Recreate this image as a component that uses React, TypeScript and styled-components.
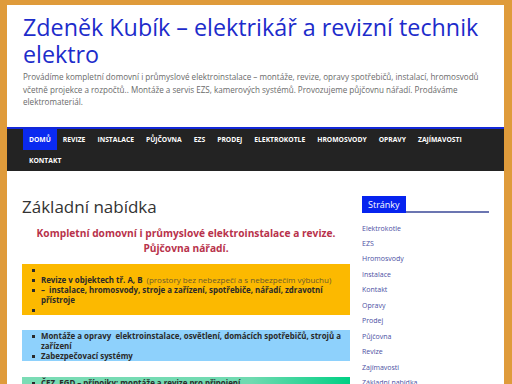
import React from "react";
import styled, { createGlobalStyle } from "styled-components";

const Global = createGlobalStyle`
  html, body { margin: 0; padding: 0; }
  body {
    background: #df9b3b;
    font-family: "Open Sans", "DejaVu Sans", sans-serif;
    overflow: hidden;
  }
`;

const Page = styled.div`
  padding: 5px 8px 0 7px;
`;

const Container = styled.div`
  background: #fff;
  width: 497px;
  min-height: 400px;
`;

const Header = styled.header`
  padding: 9px 16px 18px 16px;
`;

const SiteTitle = styled.h1`
  margin: 0;
  font-size: 23.3px;
  line-height: 27px;
  font-weight: 400;
  color: #1d2ccb;
`;

const Tagline = styled.p`
  margin: 3px 0 0;
  font-size: 8.1px;
  line-height: 12.5px;
  color: #6a6a6a;
`;

const Nav = styled.nav`
  background: #232323;
  border-top: 2px solid #1328d8;
  padding: 0 16px;
  display: flex;
  flex-wrap: wrap;
`;

const NavItem = styled.a<{ $active?: boolean }>`
  display: block;
  height: 21px;
  line-height: 21px;
  padding: 0 6px;
  font-size: 6.75px;
  font-weight: 700;
  color: #fff;
  text-transform: uppercase;
  text-decoration: none;
  background: ${(p) => (p.$active ? "#0a2af0" : "transparent")};
`;

const Body = styled.div`
  display: flex;
  gap: 12px;
  padding: 25px 15px 0 15px;
`;

const Main = styled.main`
  width: 328px;
`;

const PageTitle = styled.h2`
  margin: 0;
  font-size: 17px;
  line-height: 22px;
  font-weight: 400;
  color: #333;
`;

const Lead = styled.p`
  margin: 8px 0 0;
  text-align: center;
  font-size: 10.2px;
  line-height: 15px;
  font-weight: 700;
  color: #b8324b;
`;

const Box = styled.div<{ $bg: string; $mt: number }>`
  margin-top: ${(p) => p.$mt}px;
  background: ${(p) => p.$bg};
  padding: 1px 4px 0 10px;
`;

const List = styled.ul`
  margin: 0;
  padding: 0;
  list-style: none;
`;

const Item = styled.li`
  position: relative;
  padding-left: 9px;
  font-size: 7.9px;
  line-height: 10px;
  font-weight: 700;
  color: #2a2a2a;
  min-height: 10px;
  &::before {
    content: "";
    position: absolute;
    left: 0;
    top: 4px;
    width: 3px;
    height: 3px;
    background: #2a2a2a;
  }
`;

const Light = styled.span`
  font-weight: 400;
  font-size: 8px;
  color: #6b5a2e;
`;

const Sidebar = styled.aside`
  width: 127px;
`;

const WidgetHead = styled.div`
  display: flex;
  align-items: flex-end;
  border-bottom: 2px solid #6b75b1;
`;

const WidgetTitle = styled.h3`
  margin: 0 0 -2px;
  background: #0623ef;
  color: #fff;
  font-size: 9px;
  font-weight: 400;
  line-height: 17px;
  padding: 0 6px;
`;

const Links = styled.ul`
  margin: 8px 0 0;
  padding: 0;
  list-style: none;
`;

const LinkItem = styled.li`
  font-size: 7px;
  line-height: 15.45px;
  color: #4b4fa3;
`;

const navItems = [
  "Domů",
  "Revize",
  "Instalace",
  "Půjčovna",
  "EZS",
  "Prodej",
  "Elektrokotle",
  "Hromosvody",
  "Opravy",
  "Zajímavosti",
  "Kontakt",
];

const pages = [
  "Elektrokotle",
  "EZS",
  "Hromosvody",
  "Instalace",
  "Kontakt",
  "Opravy",
  "Prodej",
  "Půjčovna",
  "Revize",
  "Zajímavosti",
  "Základní nabídka",
];

export default function App() {
  return (
    <>
      <Global />
      <Page>
        <Container>
          <Header>
            <SiteTitle>Zdeněk Kubík – elektrikář a revizní technik elektro</SiteTitle>
            <Tagline>
              Provádíme kompletní domovní i průmyslové elektroinstalace – montáže, revize, opravy
              spotřebičů, instalací, hromosvodů včetně projekce a rozpočtů.. Montáže a servis EZS,
              kamerových systémů. Provozujeme půjčovnu nářadí. Prodáváme elektromateriál.
            </Tagline>
          </Header>
          <Nav>
            {navItems.map((n, i) => (
              <NavItem key={n} $active={i === 0}>
                {n}
              </NavItem>
            ))}
          </Nav>
          <Body>
            <Main>
              <PageTitle>Základní nabídka</PageTitle>
              <Lead>
                Kompletní domovní i průmyslové elektroinstalace a revize.
                <br />
                Půjčovna nářadí.
              </Lead>
              <Box $bg="#fcb900" $mt={8}>
                <List>
                  <Item />
                  <Item>
                    Revize v objektech tř. A, B <Light>&nbsp;(prostory bez nebezpečí a s nebezpečím výbuchu)</Light>
                  </Item>
                  <Item>–&nbsp; instalace, hromosvody, stroje a zařízení, spotřebiče, nářadí, zdravotní přístroje</Item>
                  <Item />
                </List>
              </Box>
              <Box $bg="#8ed1fc" $mt={15}>
                <List>
                  <Item>Montáže a opravy&nbsp; elektroinstalace, osvětlení, domácích spotřebičů, strojů a zařízení</Item>
                  <Item>Zabezpečovací systémy</Item>
                </List>
              </Box>
              <Box $bg="linear-gradient(90deg, #7bdcb5 0%, #6fdab0 70%, #00d084 100%)" $mt={16}>
                <List>
                  <Item>ČEZ, EGD – přípojky: montáže a revize pro připojení</Item>
                </List>
              </Box>
            </Main>
            <Sidebar>
              <WidgetHead>
                <WidgetTitle>Stránky</WidgetTitle>
              </WidgetHead>
              <Links>
                {pages.map((p) => (
                  <LinkItem key={p}>{p}</LinkItem>
                ))}
              </Links>
            </Sidebar>
          </Body>
        </Container>
      </Page>
    </>
  );
}
